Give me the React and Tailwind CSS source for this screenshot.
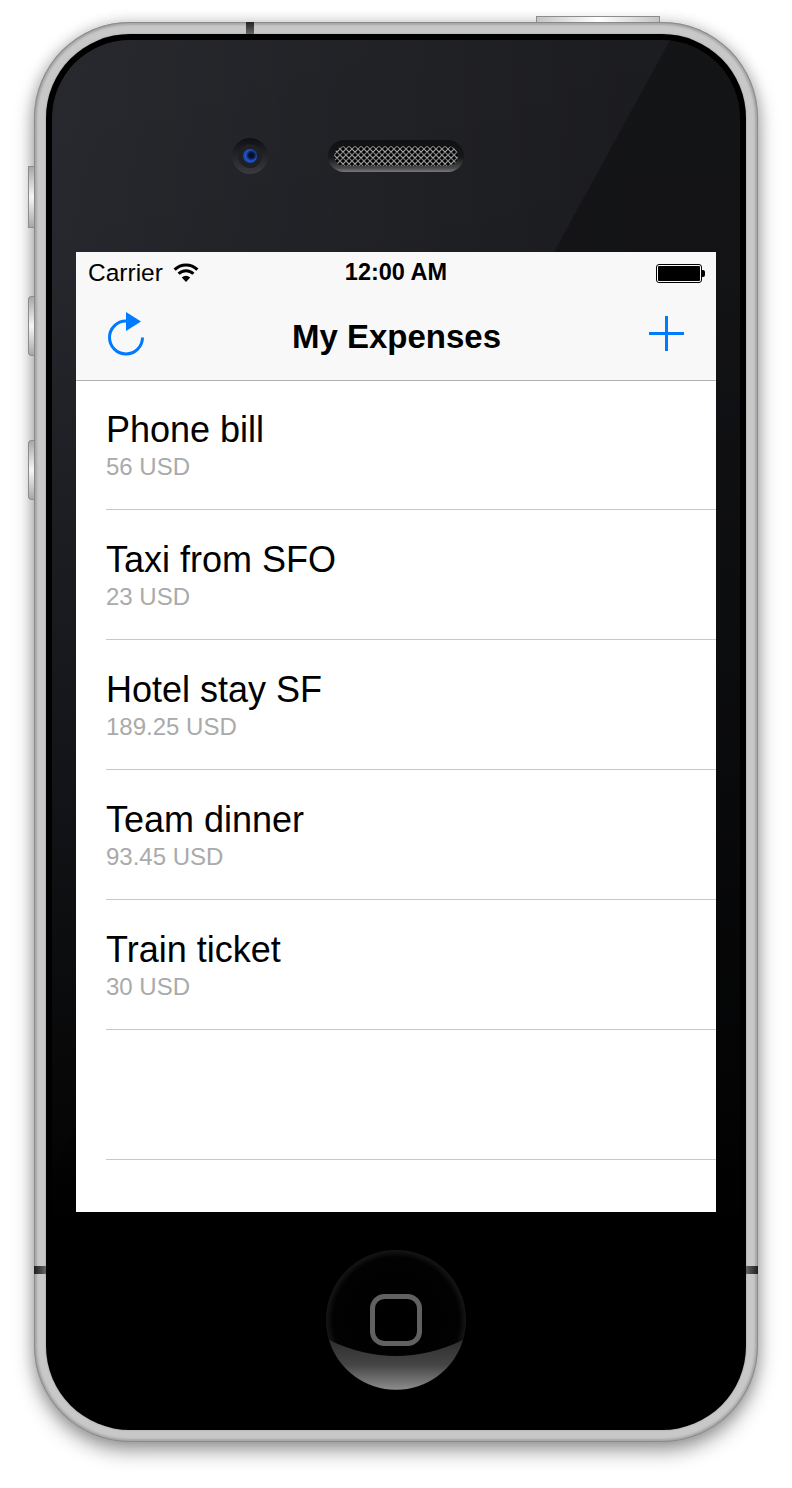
const expenses = [
  { name: "Phone bill", amount: "56 USD" },
  { name: "Taxi from SFO", amount: "23 USD" },
  { name: "Hotel stay SF", amount: "189.25 USD" },
  { name: "Team dinner", amount: "93.45 USD" },
  { name: "Train ticket", amount: "30 USD" },
];

const sideButton =
  "absolute left-[-6px] w-[6px] border border-r-0 border-[#8c8c8c] bg-[linear-gradient(180deg,#a8a8a8,#f6f6f6_50%,#a8a8a8)]";

function WifiIcon() {
  return (
    <svg width="26" height="20" viewBox="0 0 26 20" fill="none" stroke="#000" strokeWidth="3">
      <path d="M1.6 6.6A16.2 16.2 0 0 1 24.4 6.6" />
      <path d="M5.6 10.8A10.4 10.4 0 0 1 20.4 10.8" />
      <path d="M13 19 L8.8 14.4A6 6 0 0 1 17.2 14.4Z" fill="#000" stroke="none" />
    </svg>
  );
}

function Battery() {
  return (
    <div className="flex items-center">
      <div className="h-[19px] w-[46px] rounded-[3px] border border-black p-px">
        <div className="h-full w-full rounded-[1px] bg-black" />
      </div>
      <div className="h-[7px] w-[3px] rounded-r-[2px] bg-black" />
    </div>
  );
}

function RefreshIcon() {
  return (
    <svg className="-mt-[3px]" width="36" height="44" viewBox="0 0 36 44" fill="none">
      <path d="M34.5 25.5A16.5 16.5 0 1 1 18 9" stroke="#007aff" strokeWidth="3" />
      <path d="M18 0L33 9.5L18 19Z" fill="#007aff" />
    </svg>
  );
}

function PlusIcon() {
  return (
    <svg className="-mt-[4px]" width="35" height="35" viewBox="0 0 35 35" stroke="#007aff" strokeWidth="3">
      <path d="M0 17.5H35M17.5 0V35" />
    </svg>
  );
}

function HomeButton() {
  return (
    <svg width="140" height="140" viewBox="0 0 140 140">
      <defs>
        <radialGradient id="rim" cx="50%" cy="50%" r="50%">
          <stop offset="0%" stopColor="#000" />
          <stop offset="90%" stopColor="#020202" />
          <stop offset="100%" stopColor="#161616" />
        </radialGradient>
        <linearGradient id="shine" x1="0" y1="0" x2="0" y2="1">
          <stop offset="0%" stopColor="#2e2e2e" />
          <stop offset="50%" stopColor="#454545" />
          <stop offset="100%" stopColor="#8c8c8c" />
        </linearGradient>
      </defs>
      <circle cx="70" cy="70" r="70" fill="url(#rim)" />
      <path d="M3 90Q70 122 137 90A70 70 0 0 1 3 90Z" fill="url(#shine)" />
      <rect x="46.5" y="46.5" width="47" height="47" rx="12" fill="none" stroke="#616161" strokeWidth="5" />
    </svg>
  );
}

function Camera() {
  return (
    <div className="flex h-9 w-9 items-center justify-center rounded-full bg-[linear-gradient(180deg,#0e0f12,#3a3b3e)]">
      <div className="flex h-[24px] w-[24px] items-center justify-center rounded-full bg-[#1f2023]">
        <div className="h-[14px] w-[14px] rounded-full bg-[radial-gradient(circle_at_60%_45%,#061028_22%,#1f55d0_52%,#10275c_100%)]" />
      </div>
    </div>
  );
}

function Speaker() {
  return (
    <div className="h-8 w-[136px] rounded-full bg-[linear-gradient(180deg,#0f1012_0%,#17181a_55%,#4a4a4a_88%,#7a7a7a_100%)] px-[6px] pt-[6px]">
      <div className="h-[20px] rounded-full bg-[#8f8f8f] bg-[radial-gradient(circle,#000_1.4px,transparent_1.9px),radial-gradient(circle,#000_1.4px,transparent_1.9px),linear-gradient(180deg,#707070,#a8a8a8)] bg-[length:6px_6px] bg-[position:0_0,3px_3px,0_0]" />
    </div>
  );
}

function ExpenseRow({ name, amount }) {
  return (
    <div className="h-[130px] border-b border-[#c8c7cc] pt-[28px]">
      {name && (
        <>
          <p className="text-[36px] leading-[44px] text-black">{name}</p>
          <p className="pt-px text-[24px] leading-[28px] text-[#aaaaaa]">{amount}</p>
        </>
      )}
    </div>
  );
}

export default function App() {
  return (
    <div className="h-[1488px] w-[792px] overflow-hidden bg-white pl-[34px] pt-[22px] font-['Liberation_Sans',Arial,sans-serif]">
      {/* silver body */}
      <div className="relative h-[1420px] w-[724px] rounded-[96px] bg-[#c8c8c8] p-[12px] shadow-[inset_0_0_0_1px_#8a8a8a,inset_0_0_2px_3px_#a8a8a8,0_9px_20px_rgba(0,0,0,0.38),0_0_14px_rgba(0,0,0,0.16)]">
        <div className="absolute left-[502px] top-[-6px] h-[6px] w-[124px] border border-b-0 border-[#8c8c8c] bg-[linear-gradient(90deg,#c4c4c4,#ffffff_50%,#c4c4c4)]" />
        <div className={`${sideButton} top-[144px] h-[62px]`} />
        <div className={`${sideButton} top-[274px] h-[60px] rounded-l-[4px]`} />
        <div className={`${sideButton} top-[418px] h-[60px] rounded-l-[4px]`} />

        <div className="absolute left-[212px] top-0 h-[12px] w-[8px] bg-[linear-gradient(180deg,#222,#666)]" />
        <div className="absolute left-0 top-[1244px] h-[8px] w-[12px] bg-[linear-gradient(90deg,#1e1e1e,#666)]" />
        <div className="absolute right-0 top-[1244px] h-[8px] w-[12px] bg-[linear-gradient(270deg,#1e1e1e,#666)]" />

        {/* black glass */}
        <div className="h-full rounded-[84px] bg-black p-[6px] shadow-[0_0_2px_#9a9a9a]">
          <div className="h-full rounded-[78px] bg-[linear-gradient(118.7deg,transparent_42.7%,rgba(0,0,0,0.3)_42.8%),linear-gradient(90deg,transparent,rgba(0,0,0,0.3)_85%),linear-gradient(180deg,#28292e_0%,#26272c_16%,#14161a_50%,#060606_78%,#000_86%)]">
            <div className="flex h-[212px] items-start pl-[180px] pt-[98px]">
              <Camera />
              <div className="ml-[60px] mt-[2px]">
                <Speaker />
              </div>
            </div>

            {/* screen */}
            <div className="ml-[24px] h-[960px] w-[640px] overflow-hidden bg-white">
              <div className="grid h-[40px] grid-cols-3 items-center bg-[#f8f8f8] px-[12px] pt-[2px] text-black">
                <div className="flex items-center gap-[10px] text-[24.5px]">
                  Carrier
                  <WifiIcon />
                </div>
                <div className="text-center text-[23.5px] font-bold">12:00 AM</div>
                <div className="-mr-px flex justify-end">
                  <Battery />
                </div>
              </div>
              <div className="flex h-[89px] items-center justify-between border-b border-[#b2b2b2] bg-[#f8f8f8] px-[32px] pb-[1px]">
                <RefreshIcon />
                <h1 className="pt-[2px] text-[33px] font-bold text-black">My Expenses</h1>
                <PlusIcon />
              </div>
              <div className="-mt-px pl-[30px]">
                {expenses.map((e) => (
                  <ExpenseRow key={e.name} name={e.name} amount={e.amount} />
                ))}
                <ExpenseRow />
              </div>
            </div>

            <div className="ml-[274px] mt-[38px] w-[140px]">
              <HomeButton />
            </div>
          </div>
        </div>
      </div>
    </div>
  );
}
